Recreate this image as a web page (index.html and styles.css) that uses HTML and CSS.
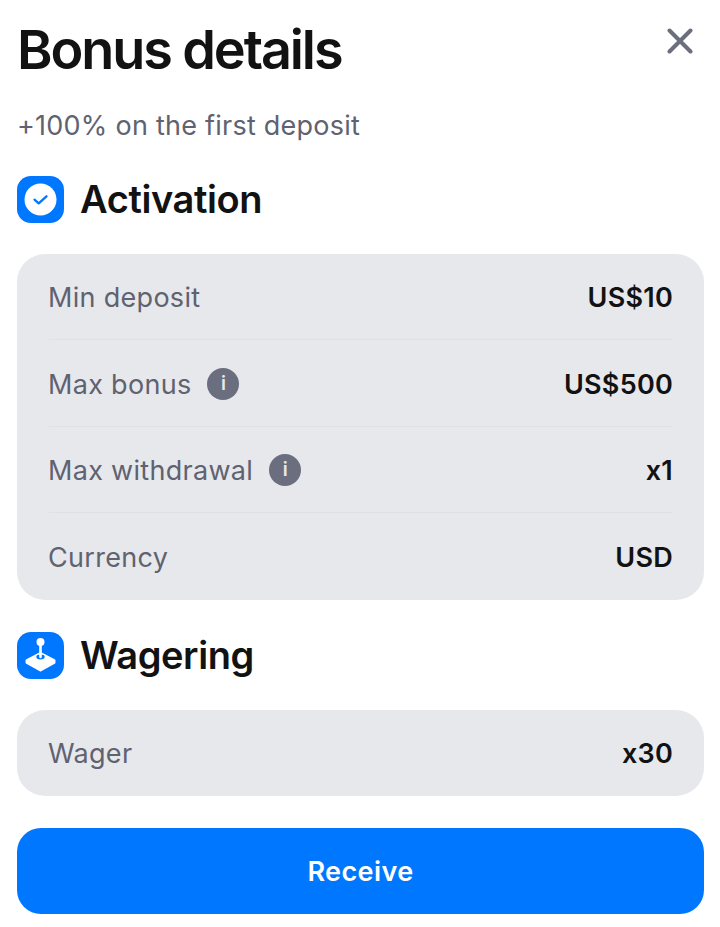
FILE: index.html
```html
<!DOCTYPE html>
<html lang="en">
<head>
  <meta charset="UTF-8" />
  <title>Bonus details</title>
  <link rel="stylesheet" href="styles.css">
</head>
<body>
<div class="box">
  <header class="top">
    <h1>Bonus details</h1>
    <button class="close" aria-label="Close">
      <svg width="26" height="26" viewBox="0 0 26 26"><path d="M2.5 2.5 23.5 23.5M23.5 2.5 2.5 23.5" stroke="#6b6e7b" stroke-width="4" stroke-linecap="round" fill="none"/></svg>
    </button>
  </header>
  <p class="sub">+100% on the first deposit</p>

  <div class="section-head">
    <span class="badge">
      <svg width="47" height="47" viewBox="0 0 47 47">
        <circle cx="23.5" cy="23.5" r="16" fill="#fff"/>
        <path d="M17.5 23.7 21.7 27.3 29.5 20.3" stroke="#0077ff" stroke-width="2.3" stroke-linecap="round" stroke-linejoin="round" fill="none"/>
      </svg>
    </span>
    <h2>Activation</h2>
  </div>
  <section class="card">
    <div class="row"><span class="label">Min deposit</span><b>US$10</b></div>
    <div class="row"><span class="label">Max bonus <i class="info">i</i></span><b>US$500</b></div>
    <div class="row"><span class="label">Max withdrawal <i class="info">i</i></span><b>x1</b></div>
    <div class="row"><span class="label">Currency</span><b>USD</b></div>
  </section>

  <div class="section-head">
    <span class="badge">
      <svg width="47" height="47" viewBox="0 0 47 47">
        <path d="M23.5 21.5 37 28.5V30.5L23.5 38 10 30.5V28.5Z" fill="#fff" stroke="#fff" stroke-width="3" stroke-linejoin="round"/>
        <ellipse cx="23.5" cy="25" rx="4.2" ry="2.4" fill="#0077ff"/>
        <path d="M23.5 12V25" stroke="#fff" stroke-width="2.6" stroke-linecap="round"/>
        <circle cx="23.5" cy="10" r="4" fill="#fff"/>
      </svg>
    </span>
    <h2>Wagering</h2>
  </div>
  <section class="card">
    <div class="row"><span class="label">Wager</span><b>x30</b></div>
  </section>

  <a href="#" class="receive">Receive</a>
</div>
</body>
</html>
```

FILE: styles.css
```css
* { margin: 0; padding: 0; box-sizing: border-box; }
html, body {
  height: 100%;
  background: #fff;
  font-family: Inter, "Liberation Sans", sans-serif;
  color: #121212;
}
.box {
  padding: 0 16px 0 17px;
}
.top {
  display: flex;
  justify-content: space-between;
  align-items: flex-start;
  padding-top: 19px;
}
h1 {
  font-size: 54px;
  line-height: 62px;
  font-weight: 600;
  letter-spacing: -2.1px;
}
.close {
  border: 0;
  background: none;
  margin: 9px 11px 0 0;
  display: flex;
}
.sub {
  margin-top: 26px;
  font-size: 27px;
  line-height: 38px;
  color: #5f6270;
  letter-spacing: 0.24px;
}
.section-head {
  display: flex;
  align-items: center;
  gap: 16px;
  margin-top: 32px;
}
.sub + .section-head { margin-top: 31px; }
.badge {
  width: 47px;
  height: 47px;
  border-radius: 14px;
  background: #0077ff;
  display: flex;
}
h2 {
  font-size: 38px;
  line-height: 47px;
  font-weight: 600;
  letter-spacing: -0.4px;
}
.card {
  margin-top: 31px;
  background: #e7e8ec;
  border-radius: 28px;
  padding: 0 32px;
}
.row {
  height: 86.4px;
  padding-top: 2px;
  display: flex;
  justify-content: space-between;
  align-items: center;
  border-bottom: 1px solid #dfe0e5;
}
.row:last-child { border-bottom: 0; }
.label {
  display: flex;
  align-items: center;
  gap: 16px;
  margin-left: -1px;
  font-size: 27px;
  color: #5f6270;
  letter-spacing: 0.3px;
}
.row b {
  margin-right: -1px;
  font-size: 27px;
  font-weight: 600;
  color: #121212;
  letter-spacing: 0.25px;
}
.info {
  width: 32px;
  height: 32px;
  border-radius: 50%;
  background: #6b6e7e;
  color: #e7e8ec;
  font-size: 19px;
  font-style: normal;
  font-weight: 600;
  line-height: 32px;
  text-align: center;
  letter-spacing: 0;
}
.receive {
  display: block;
  margin-top: 32px;
  height: 86px;
  line-height: 88px;
  border-radius: 24px;
  background: #0077ff;
  color: #fff;
  text-align: center;
  text-decoration: none;
  font-size: 27px;
  font-weight: 600;
  letter-spacing: 0.4px;
}
```
